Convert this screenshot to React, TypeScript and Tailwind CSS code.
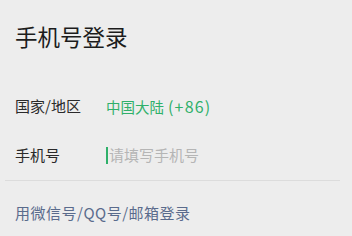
export default function App() {
  return (
    <div
      className="w-[352px] h-[236px] bg-[#ededed] overflow-hidden"
      style={{ fontFamily: '"Noto Sans CJK SC", "Noto Sans", sans-serif' }}
    >
      <div className="px-[15px] pt-[21px] h-[30px] box-content text-[22.5px] leading-[30px] text-[#1c1c1c]">
        手机号登录
      </div>

      <div className="mt-[30px]">
        <div className="flex items-center h-[50px] px-[15px] text-[15px]">
          <span className="w-[91px] text-[#2a2a2a]">国家/地区</span>
          <span className="flex items-baseline text-[#2fb06a]">
            <span className="text-[14.5px]">中国大陆</span>
            <span className="ml-[4px] text-[16px] tracking-[1.2px]">(+86)</span>
          </span>
        </div>
        <div className="ml-[5px] mr-[12px] border-b border-[#dcdcdc]">
          <div className="flex items-center h-[49px] pl-[10px] text-[15px]">
            <span className="w-[91px] text-[#2a2a2a]">手机号</span>
            <span className="flex items-center">
              <span className="w-[2px] h-[17px] bg-[#2fb06a] mr-[1px]" />
              <span className="text-[#b5b5b5]">请填写手机号</span>
            </span>
          </div>
        </div>
      </div>

      <div className="px-[15px] pt-[22px] text-[15px] leading-[20px] tracking-[0.5px] text-[#5a6b8c]">
        用微信号/QQ号/邮箱登录
      </div>
    </div>
  );
}
